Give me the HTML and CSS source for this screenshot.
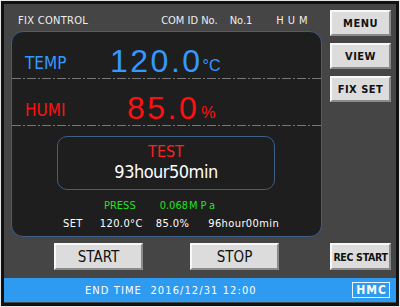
FILE: index.html
```html
<!DOCTYPE html>
<html>
	<head>
		<meta charset="UTF-8">
		<title>FIX CONTROL</title>
		<link rel="stylesheet" href="styles.css">
	</head>
	<body>
		<div class="screen">
			<div class="main">
				<div class="left">
					<div class="head">
						<span class="title">FIX CONTROL</span>
						<span class="com">COM ID No.</span>
						<span class="no">No.1</span>
						<span class="mode">HUM</span>
					</div>
					<div class="panel">
						<div class="row temp">
							<span class="label">TEMP</span>
							<span class="val">120.0</span>
							<span class="unit">&deg;C</span>
						</div>
						<div class="dash"></div>
						<div class="row humi">
							<span class="label">HUMI</span>
							<span class="val">85.0</span>
							<span class="unit">%</span>
						</div>
						<div class="dash"></div>
						<div class="status">
							<div class="test">TEST</div>
							<div class="time">93hour50min</div>
						</div>
						<div class="press">
							<span class="plabel">PRESS</span>
							<span class="pval">0.068<span class="mpa">MPa</span></span>
						</div>
						<div class="set">
							<span class="s1">SET</span>
							<span class="s2">120.0&deg;C</span>
							<span class="s3">85.0%</span>
							<span class="s4">96hour00min</span>
						</div>
					</div>
					<div class="bottom-btns">
						<div class="btn big">START</div>
						<div class="btn big">STOP</div>
					</div>
				</div>
				<div class="right">
					<div class="btn side">MENU</div>
					<div class="btn side">VIEW</div>
					<div class="btn side">FIX SET</div>
					<div class="spacer"></div>
					<div class="btn side rec">REC START</div>
				</div>
			</div>
			<div class="bar">
				<span class="end">END TIME&nbsp;&nbsp;2016/12/31 12:00</span>
				<span class="hmc">HMC</span>
			</div>
		</div>
	</body>
</html>
```

FILE: styles.css
```css
*{margin: 0;padding: 0;box-sizing: border-box;}
body{
	background: #e6e6e6;
	font-family: "DejaVu Sans", "Liberation Sans", sans-serif;
	font-stretch: condensed;
	white-space: nowrap;
}
.screen{
	width: 398px;
	height: 305px;
	margin: 1px;
	border: 3px solid #111;
	background: #454545;
	display: flex;
	flex-direction: column;
}
.main{
	height: 274px;
	display: flex;
	gap: 8px;
	padding: 6px 4px 0 7px;
}
.left{
	width: 311px;
	display: flex;
	flex-direction: column;
}
.head{
	height: 21px;
	display: flex;
	align-items: center;
	color: #eee;
	font-size: 11px;
	padding-left: 7px;
}
.title{letter-spacing: 0.3px;}
.com{margin-left: 73px;}
.no{margin-left: 12px;}
.mode{margin-left: 24px;letter-spacing: 4px;}
.panel{
	height: 206px;
	background: #1e1e1e;
	border: 1px solid #3d5f88;
	border-radius: 12px;
	display: flex;
	flex-direction: column;
}
.row{
	height: 46px;
	display: flex;
	align-items: flex-end;
	padding-bottom: 1px;
}
.row .label{
	width: 98px;
	padding-left: 13px;
	font-size: 17px;
	padding-bottom: 4px;
}
.row .val{
	font-family: "Liberation Sans", sans-serif;
	font-stretch: normal;
	font-size: 32px;
	letter-spacing: 2.5px;
	line-height: 32px;
}
.row .unit{
	font-family: "Liberation Sans", sans-serif;
	font-stretch: normal;
	font-size: 16px;
	padding-bottom: 2px;
}
.temp{color: #3399ff;}
.humi{color: #ff1010;}
.humi .val{margin-left: 17px;}
.humi .unit{margin-left: 2px;}
.dash{
	height: 1px;
	background: repeating-linear-gradient(to right, #777 0 9px, transparent 9px 11px, #777 11px 13px, transparent 13px 15px);
}
.status{
	width: 218px;
	height: 54px;
	margin: 10px 0 0 45px;
	border: 1px solid #3d5f88;
	border-radius: 10px;
	display: flex;
	flex-direction: column;
	align-items: center;
	padding-top: 6px;
}
.test{
	color: #ff2020;
	font-size: 16px;
	line-height: 18px;
}
.time{
	color: #fff;
	font-size: 18px;
	letter-spacing: -0.5px;
	line-height: 22px;
}
.press{
	display: flex;
	font-size: 11px;
	color: #22e022;
	margin-top: 9px;
	padding-left: 92px;
}
.pval{margin-left: 24px;}
.mpa{letter-spacing: 3px;margin-left: 1px;}
.set{
	display: flex;
	font-size: 11px;
	color: #fff;
	margin-top: 5px;
	padding-left: 51px;
	letter-spacing: 0.4px;
}
.s2{margin-left: 17px;}
.s3{margin-left: 13px;}
.s4{margin-left: 19px;}
.bottom-btns{
	display: flex;
	gap: 47px;
	padding-left: 43px;
	margin-top: 6px;
}
.btn{
	background: #dcdcdc;
	border: 2px solid;
	border-color: #f8f8f8 #8a8a8a #8a8a8a #f8f8f8;
	color: #111;
	display: flex;
	align-items: center;
	justify-content: center;
}
.big{
	width: 89px;
	height: 27px;
	font-size: 15px;
}
.right{
	width: 61px;
	display: flex;
	flex-direction: column;
	gap: 7px;
}
.side{
	height: 26px;
	font-size: 11px;
	font-weight: bold;
	letter-spacing: 0.5px;
}
.spacer{flex: 1;}
.rec{height: 27px;margin-bottom: 8px;letter-spacing: -0.3px;font-size: 10.5px;}
.bar{
	height: 24px;
	background: #2e9bf0;
	display: flex;
	align-items: center;
	color: #fff;
	font-size: 11px;
	padding-left: 81px;
}
.end{letter-spacing: 1.1px;}
.hmc{
	margin-left: auto;
	margin-right: 6px;
	border: 1px solid #e8f4ff;
	font-size: 12px;
	font-weight: bold;
	letter-spacing: 1px;
	padding: 0 2px 0 3px;
	line-height: 14px;
}
```
